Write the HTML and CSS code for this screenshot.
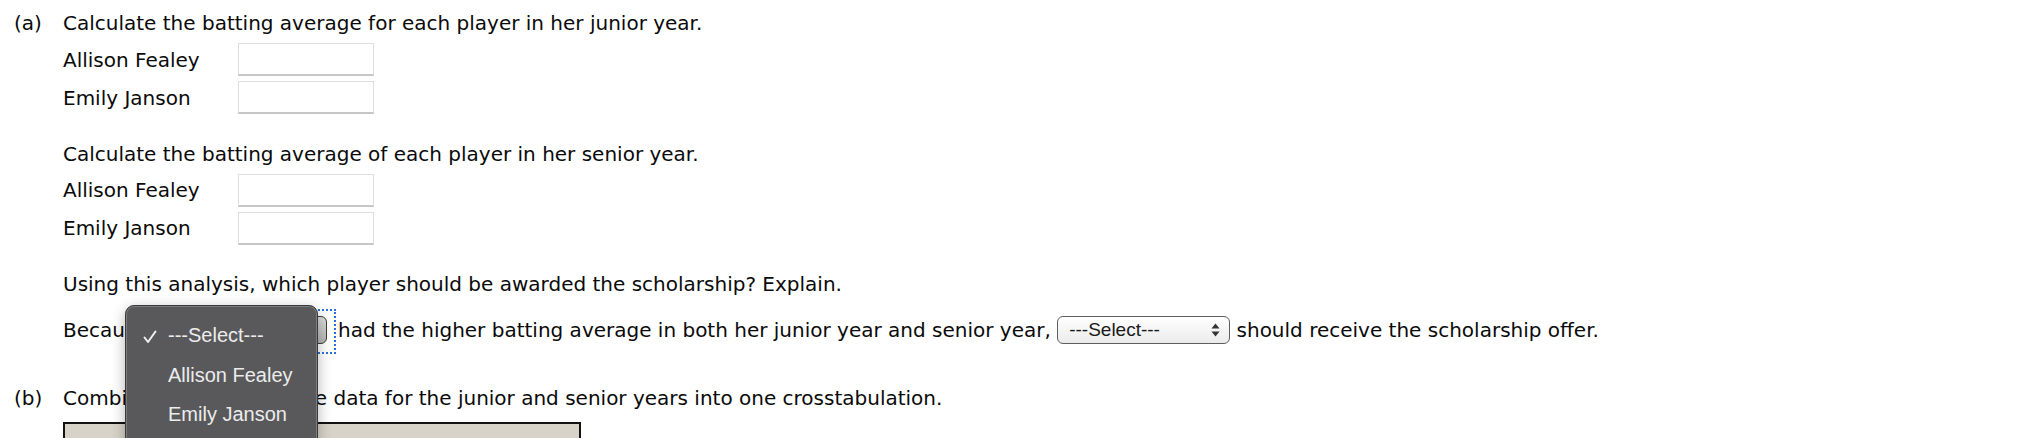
FILE: index.html
```html
<!DOCTYPE html>
<html>
<head>
<meta charset="utf-8">
<link rel="stylesheet" href="styles.css">
</head>
<body>
<div class="page">
  <div class="part">
    <div class="part-label">(a)</div>
    <div class="part-body">
      <div class="group">
        <p class="q">Calculate the batting average for each player in her junior year.</p>
        <div class="row"><span class="name">Allison Fealey</span><span class="box"></span></div>
        <div class="row"><span class="name">Emily Janson</span><span class="box"></span></div>
      </div>
      <div class="group">
        <p class="q">Calculate the batting average of each player in her senior year.</p>
        <div class="row"><span class="name">Allison Fealey</span><span class="box"></span></div>
        <div class="row"><span class="name">Emily Janson</span><span class="box"></span></div>
      </div>
      <div class="group">
        <p class="q">Using this analysis, which player should be awarded the scholarship? Explain.</p>
        <div class="sentence">
          <span class="txt">Because&nbsp;</span>
          <span class="focus"><span class="select select-active"><span class="sel-text">---Select---</span></span></span>
          <span class="txt">had the higher batting average in both her junior year and senior year,&nbsp;</span>
          <span class="select"><span class="sel-text">---Select---</span>
            <svg class="arrows" width="9" height="14" viewBox="0 0 9 14"><path d="M4.5 0.5 L8.5 5.5 L0.5 5.5 Z" fill="#333"/><path d="M4.5 13.5 L8.5 8.5 L0.5 8.5 Z" fill="#333"/></svg>
          </span>
          <span class="txt">&nbsp;should receive the scholarship offer.</span>
        </div>
      </div>
    </div>
  </div>
  <div class="part part-b">
    <div class="part-label">(b)</div>
    <div class="part-body">
      <p class="q">Combine or aggregate the data for the junior and senior years into one crosstabulation.</p>
      <div class="table"></div>
    </div>
  </div>
  <div class="popup">
    <div class="opt"><svg class="check" width="14" height="14" viewBox="0 0 14 14"><path d="M1.5 7.5 L5 12 L12.5 1.5" fill="none" stroke="#f0f0f0" stroke-width="2" stroke-linecap="round" stroke-linejoin="round"/></svg>---Select---</div>
    <div class="opt">Allison Fealey</div>
    <div class="opt">Emily Janson</div>
  </div>
</div>
</body>
</html>
```
FILE: styles.css
```css
html, body {
  margin: 0;
  padding: 0;
  background: #ffffff;
  overflow: hidden;
}
body {
  font-family: "DejaVu Sans", Verdana, sans-serif;
  font-size: 20px;
  color: #0a0a0a;
}
.page {
  position: relative;
  padding: 9px 0 0 14px;
  height: 429px;
  overflow: hidden;
}
.part {
  display: flex;
}
.part-label {
  width: 49px;
  line-height: 29px;
  flex: none;
}
.part-body {
  flex: 1;
}
.q {
  margin: 0;
  line-height: 29px;
  white-space: nowrap;
}
.group + .group {
  margin-top: 25.5px;
}
.row {
  display: flex;
  align-items: center;
  height: 33px;
  margin-top: 5px;
}
.name {
  width: 175px;
}
.box {
  width: 136px;
  height: 33px;
  box-sizing: border-box;
  border: 1px solid #dedede;
  border-bottom: 2px solid #c6c6c6;
  background: #fff;
}
.sentence {
  display: flex;
  align-items: center;
  height: 30px;
  margin-top: 16px;
  white-space: nowrap;
}
.select {
  position: relative;
  display: inline-flex;
  align-items: center;
  width: 173px;
  height: 28px;
  box-sizing: border-box;
  border: 1px solid #5e5e5e;
  border-radius: 6px;
  background: linear-gradient(#ffffff, #ebebeb);
  font-family: "Liberation Sans", Arial, sans-serif;
  font-size: 19px;
  color: #1a1a1a;
  padding-left: 11px;
}
.select-active {
  background: linear-gradient(#dcdcdc, #b4b4b4);
  border-color: #3c3c3c;
}
.arrows {
  position: absolute;
  right: 9px;
  top: 6px;
}
.focus {
  position: relative;
  display: inline-flex;
  margin-right: 11px;
}
.focus::after {
  content: "";
  position: absolute;
  top: -7px;
  bottom: -10px;
  left: -8px;
  right: -9px;
  border: 2px dotted #2a6fd8;
}
.part-b {
  margin-top: 38.5px;
}
.table {
  margin-top: 9px;
  width: 518px;
  height: 40px;
  box-sizing: border-box;
  border: 2px solid #111;
  background: #d7d3c8;
}
.popup {
  position: absolute;
  left: 125px;
  top: 305px;
  width: 193px;
  height: 150px;
  box-sizing: border-box;
  padding-top: 10px;
  background: #59595b;
  border: 1px solid #3a3a3a;
  box-shadow: inset 0 0 0 1px #7c7c7e, 0 4px 14px rgba(0,0,0,0.3);
  border-radius: 9px;
  font-family: "Liberation Sans", Arial, sans-serif;
  font-size: 20px;
  color: #ececec;
}
.opt {
  position: relative;
  height: 39.5px;
  line-height: 39.5px;
  padding-left: 42px;
  white-space: nowrap;
}
.check {
  position: absolute;
  left: 17px;
  top: 14px;
}
```
